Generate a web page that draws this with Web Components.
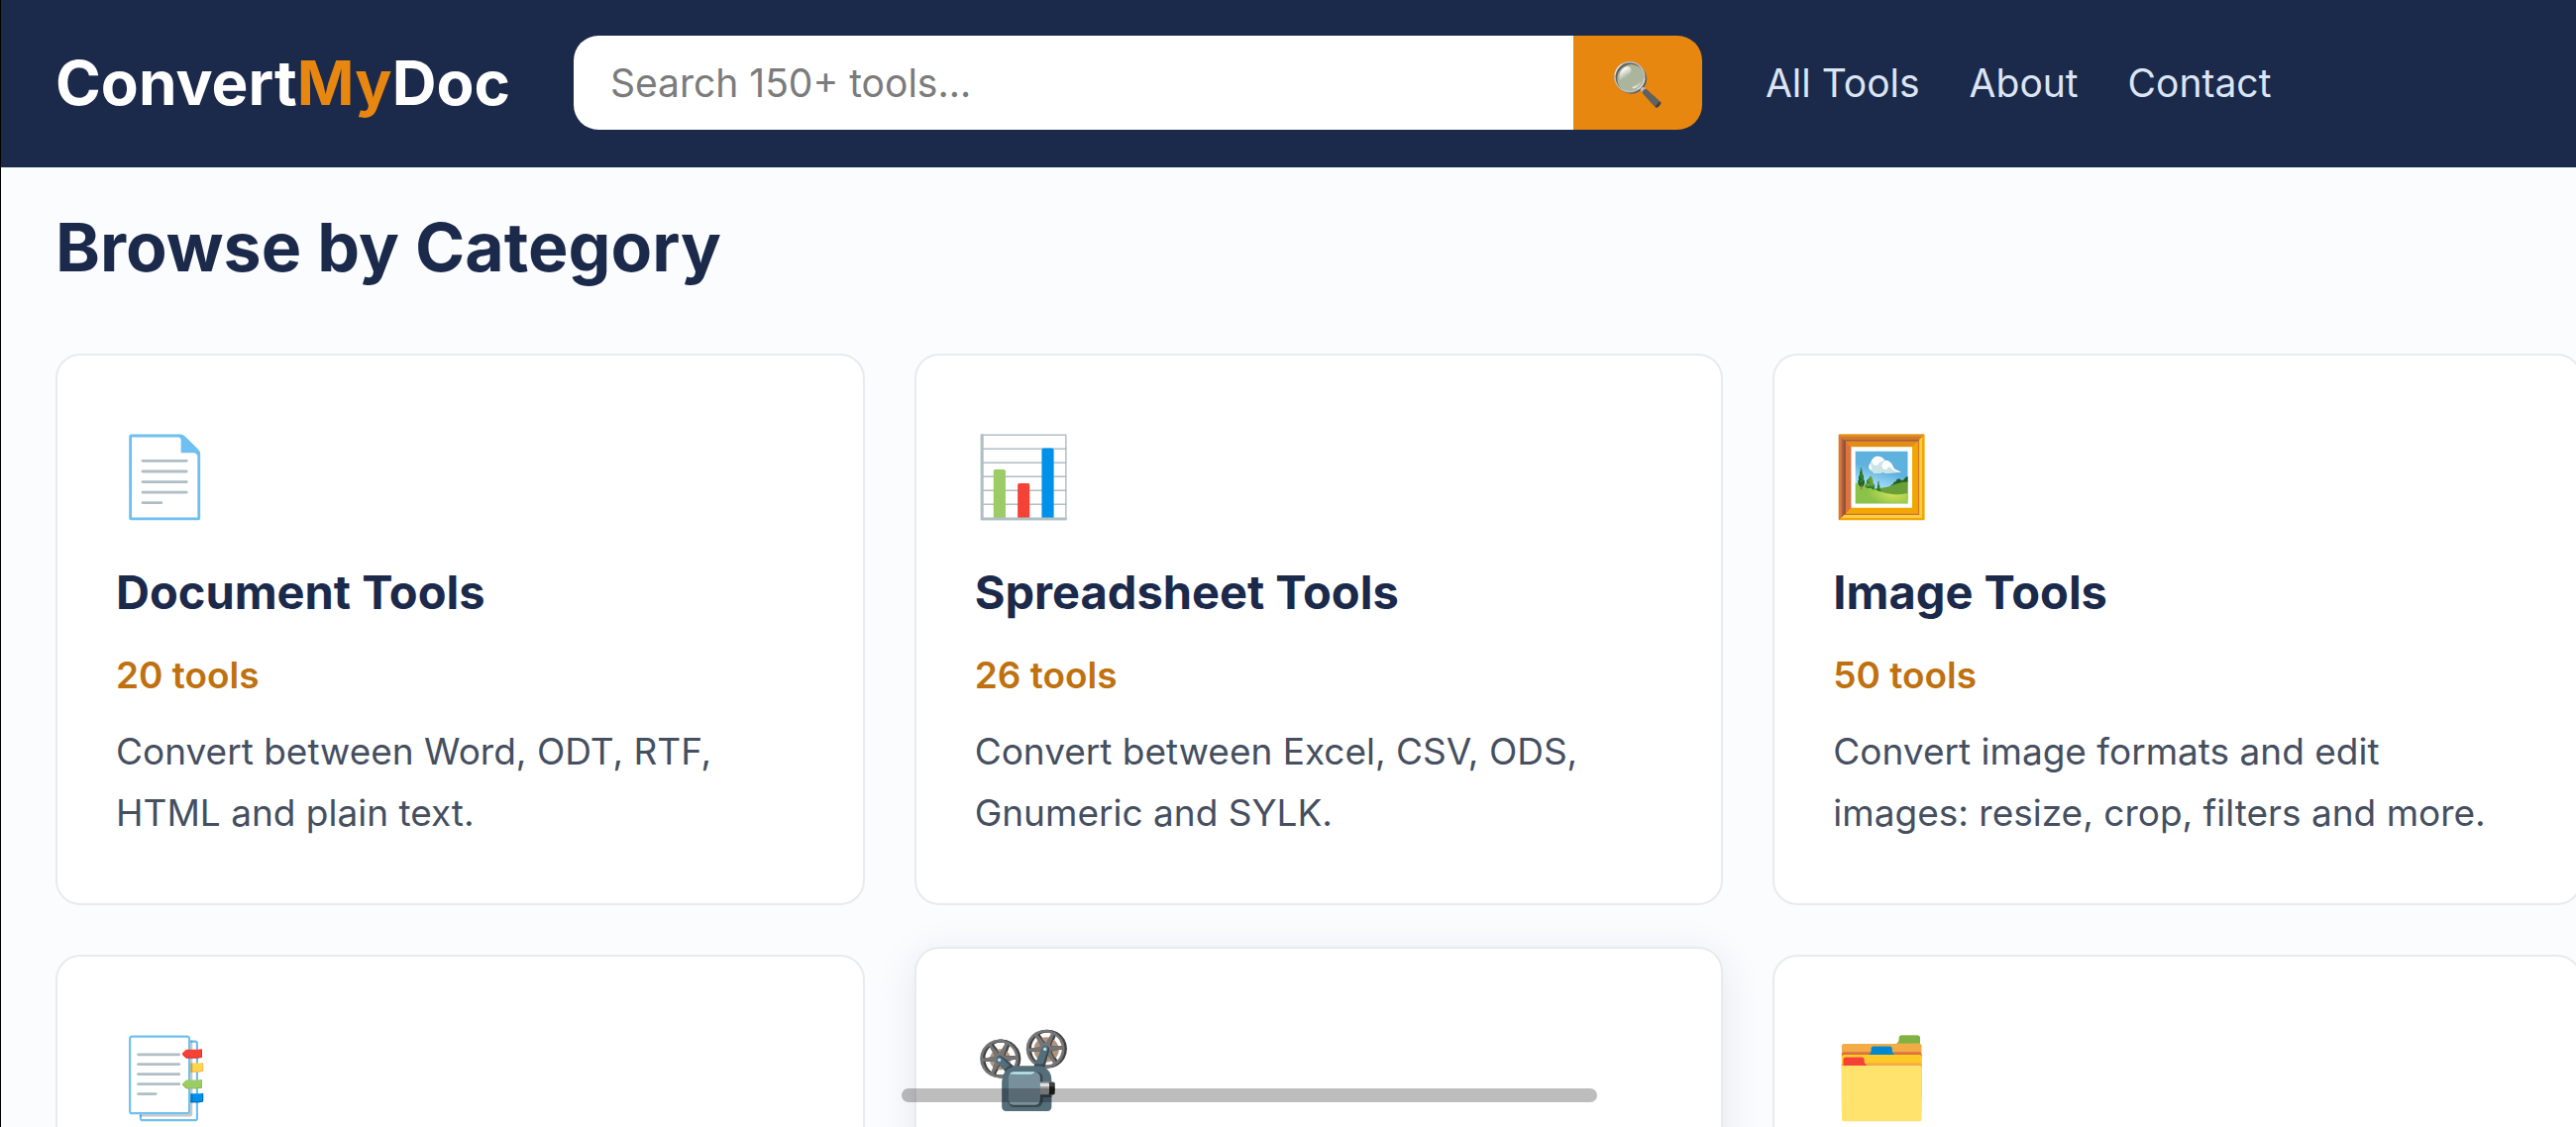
<!DOCTYPE html>
<html lang="en">
<head>
<meta charset="utf-8">
<meta name="viewport" content="width=device-width, initial-scale=1">
<title>ConvertMyDoc</title>
<style>
  :root {
    --navy: #1b294b;
    --orange: #e8870f;
    --amber: #bf7110;
    --slate: #454f5f;
    --line: #e8eaed;
    --page: #fbfcfe;
  }

  html,
  body {
    height: 100%;
    margin: 0;
    overflow: hidden;
  }

  body {
    box-sizing: border-box;
    border-left: 1px solid #000;
    background: var(--page);
    color: var(--navy);
    font-family: Inter, "Liberation Sans", sans-serif;
  }
</style>
</head>
<body>

<site-header>
  <tool-search slot="search" placeholder="Search 150+ tools..."></tool-search>
  <nav-link slot="nav" href="#tools">All Tools</nav-link>
  <nav-link slot="nav" href="#about">About</nav-link>
  <nav-link slot="nav" href="#contact">Contact</nav-link>
</site-header>

<category-grid heading="Browse by Category">
  <category-card icon="📄" name="Document Tools" count="20 tools">Convert between Word, ODT, RTF, HTML and plain text.</category-card>
  <category-card icon="📊" name="Spreadsheet Tools" count="26 tools">Convert between Excel, CSV, ODS, Gnumeric and SYLK.</category-card>
  <category-card icon="🖼️" name="Image Tools" count="50 tools">Convert image formats and edit images: resize, crop, filters and more.</category-card>
  <category-card icon="📑"></category-card>
  <category-card icon="📽️" raised></category-card>
  <category-card icon="🗂️"></category-card>
</category-grid>

<scroll-indicator></scroll-indicator>

<script>
const headerTemplate = document.createElement('template')
headerTemplate.innerHTML = `
<style>
  :host {
    display: block;
    background: var(--navy);
  }

  header {
    display: flex;
    align-items: center;
    gap: 64px;
    padding: 36px 55px 38px;
  }

  .logo {
    color: #fff;
    font-size: 62px;
    font-weight: 700;
    line-height: 92px;
    text-decoration: none;
  }

  .logo span {
    color: var(--orange);
  }

  slot[name="search"]::slotted(*) {
    flex: 1;
    max-width: 1139px;
  }

  nav {
    display: flex;
    gap: 50px;
  }
</style>

<header>
  <a class="logo" href="#">Convert<span>My</span>Doc</a>
  <slot name="search"></slot>
  <nav><slot name="nav"></slot></nav>
</header>
`

customElements.define('site-header',
  class extends HTMLElement {
    constructor () {
      super()

      this.attachShadow({ mode: 'open' }).appendChild(headerTemplate.content.cloneNode(true))
    }
  })

const searchTemplate = document.createElement('template')
searchTemplate.innerHTML = `
<style>
  :host {
    display: block;
  }

  form {
    display: flex;
    height: 95px;
    border-radius: 25px;
    overflow: hidden;
  }

  input {
    flex: 1;
    min-width: 0;
    padding: 0 37px;
    border: 0;
    background: #fff;
    color: var(--navy);
    font: inherit;
    font-size: 39px;
    outline: none;
  }

  input::placeholder {
    color: #7b7b7b;
  }

  button {
    width: 130px;
    padding: 0;
    border: 0;
    background: var(--orange);
    font: inherit;
    font-size: 43px;
    cursor: pointer;
  }
</style>

<form role="search">
  <input type="search" aria-label="Search tools">
  <button type="submit" aria-label="Search">🔍</button>
</form>
`

customElements.define('tool-search',
  class extends HTMLElement {

    #input

    constructor () {
      super()

      this.attachShadow({ mode: 'open' }).appendChild(searchTemplate.content.cloneNode(true))

      this.#input = this.shadowRoot.querySelector('input')

      this.shadowRoot.querySelector('form').addEventListener('submit', event => {
        event.preventDefault()
        this.dispatchEvent(new window.CustomEvent('search', { detail: { query: this.#input.value } }))
      })
    }

    connectedCallback () {
      this.#input.placeholder = this.getAttribute('placeholder') ?? ''
    }
  })

const linkTemplate = document.createElement('template')
linkTemplate.innerHTML = `
<style>
  :host {
    display: block;
  }

  a {
    color: #dbe5f3;
    font-size: 39px;
    line-height: 48px;
    text-decoration: none;
    white-space: nowrap;
  }

  a:hover {
    color: #fff;
  }
</style>

<a><slot></slot></a>
`

customElements.define('nav-link',
  class extends HTMLElement {
    constructor () {
      super()

      this.attachShadow({ mode: 'open' }).appendChild(linkTemplate.content.cloneNode(true))
    }

    connectedCallback () {
      this.shadowRoot.querySelector('a').href = this.getAttribute('href')
    }
  })

const gridTemplate = document.createElement('template')
gridTemplate.innerHTML = `
<style>
  :host {
    display: block;
    padding: 40px 0 56px 55px;
  }

  h2 {
    margin: 0 0 68px;
    font-size: 68px;
    font-weight: 700;
    line-height: 80px;
  }

  /* the last column runs slightly past the window edge */
  .grid {
    display: grid;
    grid-template-columns: repeat(3, 1fr);
    gap: 50px;
    margin-right: -6px;
  }
</style>

<main>
  <h2></h2>
  <div class="grid"><slot></slot></div>
</main>
`

customElements.define('category-grid',
  class extends HTMLElement {
    constructor () {
      super()

      this.attachShadow({ mode: 'open' }).appendChild(gridTemplate.content.cloneNode(true))
    }

    connectedCallback () {
      this.shadowRoot.querySelector('h2').textContent = this.getAttribute('heading')
    }
  })

const cardTemplate = document.createElement('template')
cardTemplate.innerHTML = `
<style>
  :host {
    display: block;
    min-width: 0;
  }

  a {
    display: block;
    box-sizing: border-box;
    height: 100%;
    padding: 61px 59px 60px;
    border: 2px solid var(--line);
    border-radius: 25px;
    background: #fff;
    color: var(--navy);
    text-decoration: none;
  }

  :host([raised]) a,
  a:hover {
    box-shadow: 0 8px 40px rgba(27, 41, 75, 0.1);
    transform: translateY(-8px);
  }

  .icon {
    margin-bottom: 30px;
    font-size: 79px;
    line-height: 120px;
  }

  h3 {
    margin: 0 0 35px;
    font-size: 47px;
    font-weight: 700;
    line-height: 56px;
  }

  .count {
    margin-bottom: 25px;
    color: var(--amber);
    font-size: 37px;
    font-weight: 600;
    line-height: 42px;
  }

  p {
    margin: 0;
    color: var(--slate);
    font-size: 37px;
    line-height: 62px;
  }
</style>

<a href="#">
  <div class="icon" aria-hidden="true"></div>
  <h3></h3>
  <div class="count"></div>
  <p><slot></slot></p>
</a>
`

customElements.define('category-card',
  class extends HTMLElement {
    constructor () {
      super()

      this.attachShadow({ mode: 'open' }).appendChild(cardTemplate.content.cloneNode(true))
    }

    connectedCallback () {
      this.shadowRoot.querySelector('.icon').textContent = this.getAttribute('icon')
      this.shadowRoot.querySelector('h3').textContent = this.getAttribute('name')
      this.shadowRoot.querySelector('.count').textContent = this.getAttribute('count')
    }
  })

const scrollTemplate = document.createElement('template')
scrollTemplate.innerHTML = `
<style>
  :host {
    position: fixed;
    bottom: 25px;
    left: 35%;
    width: 27%;
    height: 14px;
    border-radius: 7px;
    background: rgba(0, 0, 0, 0.26);
    pointer-events: none;
  }
</style>
`

customElements.define('scroll-indicator',
  class extends HTMLElement {
    constructor () {
      super()

      this.attachShadow({ mode: 'open' }).appendChild(scrollTemplate.content.cloneNode(true))
    }
  })
</script>
</body>
</html>
